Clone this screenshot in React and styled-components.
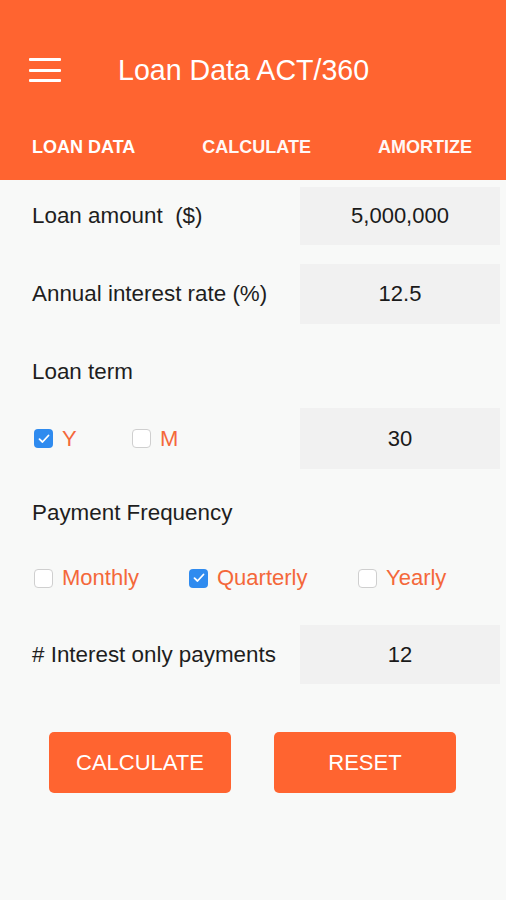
import React, { useState } from 'react';
import styled, { createGlobalStyle } from 'styled-components';

const GlobalStyle = createGlobalStyle`
  html, body {
    margin: 0;
    padding: 0;
    background: #f8f9f8;
    font-family: "Liberation Sans", Arial, Helvetica, sans-serif;
  }
`;

const ORANGE = '#ff6430';

const Page = styled.div`
  width: 506px;
  min-height: 900px;
  background: #f8f9f8;
`;

const Header = styled.header`
  background: ${ORANGE};
  height: 180px;
  display: flex;
  flex-direction: column;
`;

const TopBar = styled.div`
  display: flex;
  align-items: center;
  height: 52px;
  margin-top: 44px;
  padding-left: 29px;
`;

const MenuButton = styled.button`
  width: 32px;
  height: 24px;
  padding: 0;
  border: 0;
  background: transparent;
  display: flex;
  flex-direction: column;
  justify-content: space-between;
  cursor: pointer;
`;

const MenuLine = styled.span`
  display: block;
  height: 3px;
  background: #fff;
  border-radius: 1px;
`;

const Title = styled.h1`
  margin: 0 0 0 57px;
  color: #fff;
  font-size: 28.6px;
  font-weight: normal;
  line-height: 1;
`;

const Tabs = styled.nav`
  flex: 1;
  display: flex;
  align-items: center;
  justify-content: space-between;
  padding: 18px 34px 0 32px;
`;

const Tab = styled.span`
  color: #fff;
  font-size: 18px;
  font-weight: bold;
  opacity: ${p => (p.active ? 1 : 0.96)};
`;

const Form = styled.main`
  display: flex;
  flex-direction: column;
  padding: 0 6px 0 32px;
`;

const Row = styled.div`
  display: flex;
  align-items: center;
  justify-content: space-between;
  margin-top: ${p => p.top}px;
`;

const Label = styled.label`
  color: #1e1e1e;
  font-size: 22.4px;
  white-space: pre;
`;

const SectionLabel = styled.div`
  color: #1e1e1e;
  font-size: 22.4px;
  line-height: 26px;
  margin-top: ${p => p.top}px;
`;

const ValueInput = styled.input`
  width: 200px;
  height: ${p => p.h}px;
  box-sizing: border-box;
  border: 0;
  outline: none;
  background: #f1f1f1;
  text-align: center;
  font-family: inherit;
  font-size: 22px;
  color: #1a1a1a;
`;

const Options = styled.div`
  display: grid;
  grid-template-columns: ${p => p.cols};
  align-items: center;
  margin-left: 2px;
  margin-top: ${p => p.top || 0}px;
  height: 26px;
`;

const Option = styled.label`
  display: flex;
  align-items: center;
  gap: 9px;
  color: #f4683a;
  font-size: 22px;
  cursor: pointer;
`;

const Box = styled.span`
  width: 19px;
  height: 19px;
  box-sizing: border-box;
  border-radius: 4px;
  border: ${p => (p.checked ? '0' : '1.5px solid #cfcfcf')};
  background: ${p => (p.checked ? '#2f8bef' : '#fff')};
  display: flex;
  align-items: center;
  justify-content: center;
`;

const Buttons = styled.div`
  display: flex;
  gap: 43px;
  margin: 48px 0 0 17px;
`;

const ActionButton = styled.button`
  width: 182px;
  height: 61px;
  border: 0;
  border-radius: 5px;
  background: ${ORANGE};
  color: #fff;
  font-family: inherit;
  font-size: 22px;
  cursor: pointer;
`;

const Check = ({ checked, label, onClick }) => (
  <Option onClick={onClick}>
    <Box checked={checked}>
      {checked && (
        <svg width="12" height="10" viewBox="0 0 12 10">
          <path d="M1.5 5.2 L4.5 8 L10.5 1.5" fill="none" stroke="#fff" strokeWidth="1.8" strokeLinecap="round" strokeLinejoin="round" />
        </svg>
      )}
    </Box>
    {label}
  </Option>
);

export default function App() {
  const [termUnit, setTermUnit] = useState('Y');
  const [freq, setFreq] = useState('Quarterly');

  return (
    <Page>
      <GlobalStyle />
      <Header>
        <TopBar>
          <MenuButton aria-label="menu">
            <MenuLine />
            <MenuLine />
            <MenuLine />
          </MenuButton>
          <Title>Loan Data ACT/360</Title>
        </TopBar>
        <Tabs>
          <Tab active>LOAN DATA</Tab>
          <Tab>CALCULATE</Tab>
          <Tab>AMORTIZE</Tab>
        </Tabs>
      </Header>

      <Form>
        <Row top={7}>
          <Label>Loan amount  ($)</Label>
          <ValueInput h={58} defaultValue="5,000,000" />
        </Row>
        <Row top={19}>
          <Label>Annual interest rate (%)</Label>
          <ValueInput h={60} defaultValue="12.5" />
        </Row>

        <SectionLabel top={35}>Loan term</SectionLabel>
        <Row top={23}>
          <Options cols="98px auto">
            <Check checked={termUnit === 'Y'} label="Y" onClick={() => setTermUnit('Y')} />
            <Check checked={termUnit === 'M'} label="M" onClick={() => setTermUnit('M')} />
          </Options>
          <ValueInput h={61} defaultValue="30" />
        </Row>

        <SectionLabel top={31}>Payment Frequency</SectionLabel>
        <Options cols="155px 169px auto" top={39}>
          {['Monthly', 'Quarterly', 'Yearly'].map(f => (
            <Check key={f} checked={freq === f} label={f} onClick={() => setFreq(f)} />
          ))}
        </Options>

        <Row top={34}>
          <Label># Interest only payments</Label>
          <ValueInput h={59} defaultValue="12" />
        </Row>

        <Buttons>
          <ActionButton>CALCULATE</ActionButton>
          <ActionButton>RESET</ActionButton>
        </Buttons>
      </Form>
    </Page>
  );
}
